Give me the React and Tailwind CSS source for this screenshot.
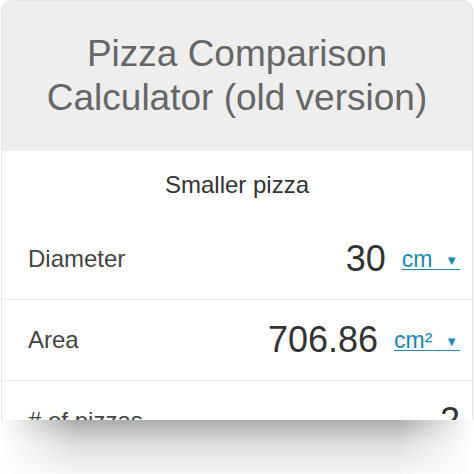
export default function App() {
  const font = { fontFamily: '"Liberation Sans", Arial, sans-serif' };

  return (
    <div className="w-[474px] h-[474px] bg-white overflow-hidden" style={font}>
      {/* card, cut off at the bottom */}
      <div className="w-[472px] h-[420px] ml-px overflow-hidden rounded-t-[10px] border-x border-t border-[#e4e4e4] bg-white">
        <div className="h-[150px] bg-[#eeeeee] flex items-center justify-center">
          <h1 className="text-center text-[37px] leading-[44px] text-[#666666] font-normal">
            Pizza Comparison
            <br />
            Calculator (old version)
          </h1>
        </div>

        <div className="h-[68px] flex items-center justify-center text-[24px] text-[#333333]">
          Smaller pizza
        </div>

        <Row label="Diameter" value="30" unit="cm" />
        <Row label="Area" value="706.86" unit="cm²" />
        <Row label="# of pizzas" value="2" />
      </div>

      {/* fade shadow under the cut */}
      <div className="h-[54px] bg-[linear-gradient(to_bottom,#acacac,#dedede_45%,#f6f6f6)] [mask-image:linear-gradient(to_right,transparent,black_16%,black_84%,transparent)]" />
    </div>
  );
}

function Row({ label, value, unit }) {
  return (
    <div className="h-[81px] flex items-center border-b border-[#ececec] pl-[26px] pr-[12px]">
      <span className="flex-1 text-[24px] text-[#444444]">{label}</span>
      <span className="text-[36px] text-[#333333] leading-none">{value}</span>
      {unit ? (
        <span className="ml-[16px] text-[23px] text-[#1b87b5] underline decoration-1 underline-offset-[2px] whitespace-pre">
          {unit}
          {"  "}
          <span className="text-[13px] relative -top-[2px]">▼</span>
          {"\u200a"}
        </span>
      ) : null}
    </div>
  );
}
